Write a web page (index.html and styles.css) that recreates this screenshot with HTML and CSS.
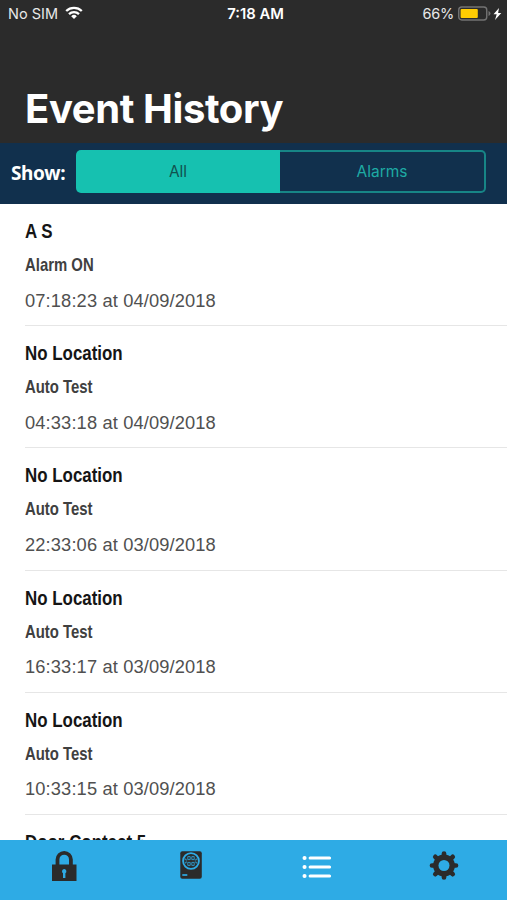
FILE: index.html
```
<!DOCTYPE html>
<html lang="en">
<head>
<meta charset="utf-8">
<title>Event History</title>
<link rel="stylesheet" href="styles.css">
</head>
<body>
<div class="app">
  <header class="header">
    <div class="status">
      <div class="carrier"><span>No SIM</span>
        <svg class="wifi" width="18" height="14" viewBox="0 0 18 14" fill="none" stroke="#fff" stroke-width="2.3"><path d="M1.2 5a11.200 11.200 0 0 1 15.600 0M4 8.200a7.200 7.200 0 0 1 10 0"/><path d="M6.200 10.200a4 4 0 0 1 5.600 0L9 13z" fill="#fff" stroke="none"/></svg>
      </div>
      <div class="time">7:18 AM</div>
      <div class="power"><span>66%</span>
        <svg width="44" height="16" viewBox="0 0 44 16"><rect x=".75" y="1" width="28" height="13" rx="3" fill="none" stroke="#737373" stroke-width="1.4"/><rect x="2.6" y="3" width="17.2" height="9" rx="1" fill="#ffcc02"/><path d="M30.5 5q2 .8 2 2.5t-2 2.5z" fill="#737373"/><path d="M41 2l-5.500 6.200h3.200L37 14l6.300-7h-3.200z" fill="#fff"/></svg>
      </div>
    </div>
    <h1 class="title">Event History</h1>
  </header>
  <div class="filter">
    <span class="filter-label">Show:</span>
    <div class="segments"><div class="segment active">All</div><div class="segment">Alarms</div></div>
  </div>
  <main class="list">
    <article class="event"><h2 class="place">A S</h2><p class="kind">Alarm ON</p><p class="date">07:18:23 at 04/09/2018</p></article>
    <article class="event"><h2 class="place">No Location</h2><p class="kind">Auto Test</p><p class="date">04:33:18 at 04/09/2018</p></article>
    <article class="event"><h2 class="place">No Location</h2><p class="kind">Auto Test</p><p class="date">22:33:06 at 03/09/2018</p></article>
    <article class="event"><h2 class="place">No Location</h2><p class="kind">Auto Test</p><p class="date">16:33:17 at 03/09/2018</p></article>
    <article class="event"><h2 class="place">No Location</h2><p class="kind">Auto Test</p><p class="date">10:33:15 at 03/09/2018</p></article>
    <article class="event"><h2 class="place">Door Contact 5</h2></article>
  </main>
  <nav class="tabs">
    <div class="tab"><svg width="34" height="34" viewBox="-1 0 34 34"><path d="M10.500 17v-6.500a6.700 6.700 0 0 1 13.400 0V17" fill="none" stroke="#2b2b2b" stroke-width="3.800"/><path d="M5 15.500h24.500V32H5z" fill="#2b2b2b"/><path d="M17.200 20a2.300 2.300 0 0 1 1.200 4.200V29h-2.400v-4.800a2.300 2.300 0 0 1 1.200-4.200z" fill="#2eabe5"/></svg></div>
    <div class="tab"><svg width="34" height="34" viewBox="-.5 0 34 34"><rect x="6.800" y="2.300" width="21.500" height="27.500" rx="2" fill="#2b2b2b"/><g fill="none" stroke="#2eabe5"><circle cx="17.500" cy="12" r="7.900" stroke-width="1.900"/><path d="M14.300 7.600h2.400v3h-2.400zM18.300 7.600h2.400v3h-2.400zM14.300 13.400h2.400v3h-2.400zM18.300 13.400h2.400v3h-2.400zM12.200 9.500v1.500h1.500M22.800 9.500v1.500h-1.500M12.200 14.500V13h1.500M22.800 14.500V13h-1.500" stroke-width=".8"/><path d="M8.800 26h5" stroke-width="1.700"/></g></svg></div>
    <div class="tab"><svg width="34" height="34" viewBox="-.5 0 34 34" fill="none" stroke="#fff" stroke-linecap="round"><path d="M9.600 9h19.500M9.600 18h19.500M9.600 27h19.500" stroke-width="3"/><path d="M4 9h.1M4 18h.1M4 27h.1" stroke-width="4"/></svg></div>
    <div class="tab"><svg width="34" height="34" viewBox="-17 -16.500 34 34"><path d="M0-12v24M-12 0h24M-8.700-8.700L8.700 8.700M-8.700 8.700L8.700-8.700" fill="none" stroke="#2b2b2b" stroke-linecap="round" stroke-width="4.700"/><circle r="10.900" fill="#2b2b2b"/><circle r="5.500" fill="#2eabe5"/></svg></div>
  </nav>
</div>
</body>
</html>
```
FILE: styles.css
```
* { box-sizing: border-box; }
body { margin: 0; background: #fff; }
h1, h2, p { margin: 0; }
svg { display: block; }
.app { width: 507px; height: 900px; display: flex; flex-direction: column; overflow: hidden; font-family: "Liberation Sans", sans-serif; }
.header { height: 143px; flex: none; background: #2b2b2b; color: #fff; }
.status { height: 28px; padding: 0 5px 0 8px; display: grid; grid-template-columns: 1fr auto 1fr; align-items: center; font: 14.5px/28px Inter, sans-serif; color: #e8e8e8; }
.carrier { display: flex; align-items: center; gap: 7px; }
.wifi { margin-top: -2px; }
.time { font-weight: 600; font-size: 14.800px; color: #fff; padding-left: 1px; }
.power { display: flex; align-items: center; justify-content: flex-end; gap: 4px; letter-spacing: -.2px; }
.title { padding: 55px 0 0 25px; font: 700 40px/52px Inter, sans-serif; letter-spacing: -.4px; }
.filter { height: 61px; flex: none; display: flex; align-items: center; padding: 0 21px 4px 11px; background: #11304d; }
.filter-label { width: 65px; padding-top: 2px; color: #fff; font: 700 19px/26px "Noto Sans", sans-serif; letter-spacing: -.35px; }
.segments { flex: 1; height: 43px; display: flex; }
.segment { flex: 1; text-align: center; border: 2px solid #178586; border-left: 0; border-radius: 0 5px 5px 0; font: 15.500px/39px Inter, sans-serif; color: #1eaaa4; }
.segment.active { border: 0; border-radius: 5px 0 0 5px; line-height: 43px; background: #16c1b0; color: #11524f; }
.list { flex: 1; min-height: 0; overflow: hidden; padding-left: 25px; }
.event { height: 122.200px; padding-top: 14px; border-bottom: 1px solid #e6e6e6; white-space: nowrap; }
.place, .kind { width: max-content; transform: scaleX(.805); transform-origin: left; }
.place { font: 700 21px/26px "Liberation Sans", sans-serif; color: #151515; }
.kind { margin-top: 9px; font: 700 18.500px/24px "Liberation Sans", sans-serif; color: #404040; }
.date { margin-top: 12.500px; font-size: 18.300px; line-height: 22px; letter-spacing: .13px; color: #505050; }
.tabs { height: 60px; flex: none; display: grid; grid-template-columns: repeat(4, 1fr); padding-top: 9px; background: #2eabe5; }
.tab { display: flex; justify-content: center; }
```
